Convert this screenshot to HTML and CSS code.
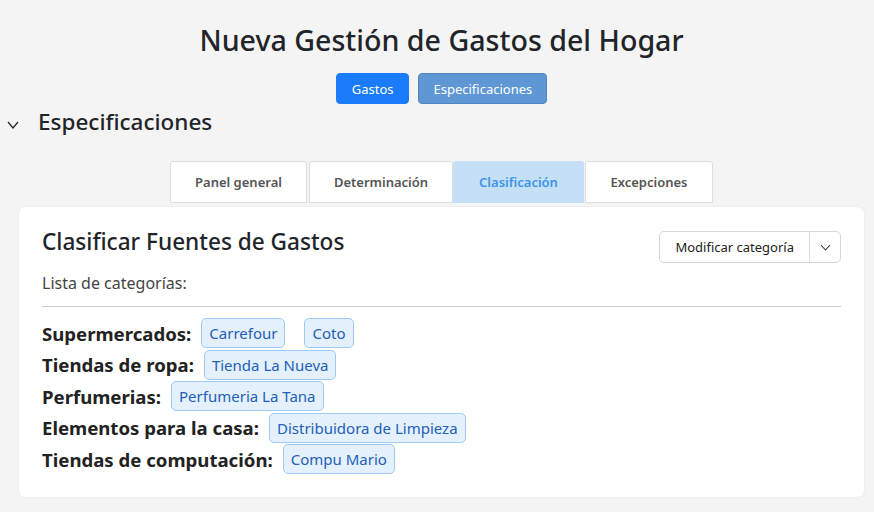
FILE: index.html
```html
<!DOCTYPE html>
<html lang="es">
<head>
<meta charset="utf-8">
<link rel="stylesheet" href="styles.css">
</head>
<body>
<div class="page">
  <h1 class="title">Nueva Gestión de Gastos del Hogar</h1>
  <div class="topnav">
    <button class="btn btn-primary">Gastos</button>
    <button class="btn btn-active">Especificaciones</button>
  </div>
  <div class="section-head">
    <span class="chev"><svg width="12" height="8" viewBox="0 0 12 8"><path d="M1 1 L6 7 L11 1" fill="none" stroke="#222" stroke-width="1.2"/></svg></span>
    <h2 class="section-title">Especificaciones</h2>
  </div>
  <div class="tabs">
    <div class="tab">Panel general</div>
    <div class="tab">Determinación</div>
    <div class="tab tab-active">Clasificación</div>
    <div class="tab">Excepciones</div>
  </div>
  <div class="card">
    <div class="card-head">
      <h3 class="card-title">Clasificar Fuentes de Gastos</h3>
      <div class="split">
        <span class="split-main">Modificar categoría</span>
        <span class="split-toggle"><svg width="11" height="7" viewBox="0 0 11 7"><path d="M1 1 L5.5 6 L10 1" fill="none" stroke="#333" stroke-width="1.1"/></svg></span>
      </div>
    </div>
    <p class="subtitle">Lista de categorías:</p>
    <hr class="divider">
    <div class="cats">
      <div class="cat"><span class="cat-name">Supermercados:</span><span class="badge">Carrefour</span><span class="badge gap">Coto</span></div>
      <div class="cat"><span class="cat-name">Tiendas de ropa:</span><span class="badge">Tienda La Nueva</span></div>
      <div class="cat"><span class="cat-name">Perfumerias:</span><span class="badge">Perfumeria La Tana</span></div>
      <div class="cat"><span class="cat-name">Elementos para la casa:</span><span class="badge">Distribuidora de Limpieza</span></div>
      <div class="cat"><span class="cat-name">Tiendas de computación:</span><span class="badge">Compu Mario</span></div>
    </div>
  </div>
</div>
</body>
</html>
```
FILE: styles.css
```css
* { box-sizing: border-box; }
html, body { margin: 0; padding: 0; }
body {
  background: #f4f4f4;
  font-family: "Noto Sans", "Open Sans", sans-serif;
  color: #212529;
  width: 874px;
  height: 512px;
  overflow: hidden;
}
.page { padding: 0 9px 0 18px; }
.title {
  margin: 0;
  padding-top: 22px;
  text-align: center;
  font-size: 28.6px;
  font-weight: 500;
  line-height: 36px;
  height: 73px;
}
.topnav {
  display: flex;
  justify-content: center;
  gap: 9px;
  height: 31px;
}
.btn {
  font-family: inherit;
  font-size: 13px;
  color: #fff;
  border-radius: 4px;
  border: 1px solid transparent;
  padding: 0 15px;
  height: 31px;
}
.btn-primary { background: #1a7cfa; border-color: #1a7cfa; }
.btn-active { background: #5e97d3; border-color: #4f86c2; padding: 0 14px; }
.section-head {
  display: flex;
  align-items: center;
  margin-left: -18px;
  height: 35px;
}
.chev { width: 38px; padding-left: 7px; display: flex; align-items: center; padding-top: 6px; }
.section-title {
  margin: 0;
  font-size: 22.5px;
  font-weight: 500;
}
.tabs {
  display: flex;
  justify-content: center;
  gap: 2px;
  margin-top: 22px;
}
.tab {
  background: #fff;
  border: 1px solid #ddd;
  border-radius: 3px 3px 0 0;
  height: 42px;
  display: flex;
  align-items: center;
  justify-content: center;
  font-size: 13px;
  font-weight: 600;
  color: #555;
}
.tab:nth-child(1) { width: 137px; }
.tab:nth-child(2) { width: 144px; }
.tab:nth-child(3) { width: 131px; margin-left: -2px; }
.tab:nth-child(4) { width: 128px; margin-left: -1px; }
.tab-active { background: #c5dff7; border-color: #c5dff7; color: #3b94e6; }
.card {
  background: #fff;
  border-radius: 8px;
  margin-top: 3px;
  width: 847px;
  height: 292px;
  padding: 20px 23px 0 23px;
  border: 1px solid #eee;
}
.card-head { display: flex; justify-content: space-between; align-items: flex-start; }
.card-title {
  margin: 0;
  font-size: 22.6px;
  font-weight: 500;
  line-height: 30px;
}
.split {
  display: flex;
  height: 32px;
  border: 1px solid #d6d6d6;
  border-radius: 5px;
  margin-top: 4px;
  font-size: 13px;
  color: #222;
}
.split-main { display: flex; align-items: center; padding: 0 15px; border-right: 1px solid #ddd; }
.split-toggle { display: flex; align-items: center; justify-content: center; width: 30px; }
.subtitle {
  margin: 8px 0 0 0;
  font-size: 16px;
  color: #444;
  line-height: 24px;
}
.divider { border: 0; border-top: 1px solid #ccc; margin: 11px 0 11px 0; }
.cats { display: flex; flex-direction: column; gap: 1.5px; }
.cat { display: flex; align-items: center; height: 30px; }
.cat-name { font-size: 18.6px; font-weight: 700; color: #222; margin-right: 10px; }
.badge {
  font-size: 15px;
  color: #2360b8;
  background: #e4f1fd;
  border: 1px solid #9dcbf4;
  border-radius: 5px;
  padding: 0 7px;
  height: 30px;
  display: flex;
  align-items: center;
}
.badge.gap { margin-left: 19px; }
```
